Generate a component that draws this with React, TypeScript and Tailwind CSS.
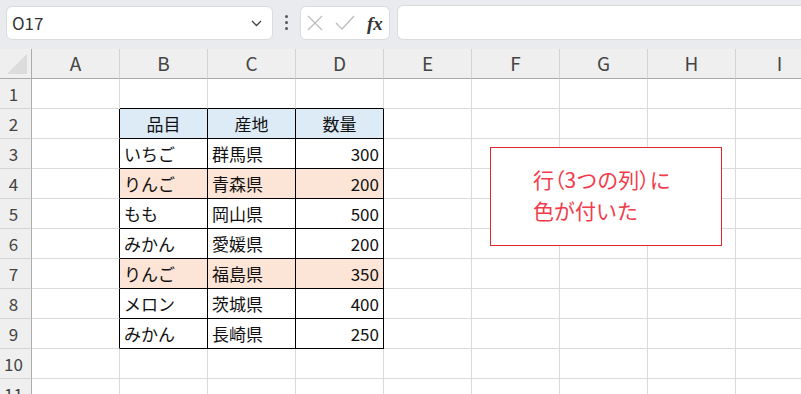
import React from 'react';

const cols = ['A', 'B', 'C', 'D', 'E', 'F', 'G', 'H', 'I'];

const table: { cells: string[]; kind: 'head' | 'plain' | 'peach' }[] = [
  { cells: ['品目', '産地', '数量'], kind: 'head' },
  { cells: ['いちご', '群馬県', '300'], kind: 'plain' },
  { cells: ['りんご', '青森県', '200'], kind: 'peach' },
  { cells: ['もも', '岡山県', '500'], kind: 'plain' },
  { cells: ['みかん', '愛媛県', '200'], kind: 'plain' },
  { cells: ['りんご', '福島県', '350'], kind: 'peach' },
  { cells: ['メロン', '茨城県', '400'], kind: 'plain' },
  { cells: ['みかん', '長崎県', '250'], kind: 'plain' },
];

const font = "font-['Noto_Sans_CJK_JP','Noto_Sans',sans-serif]";

function Cell({ row, col }: { row: number; col: number }) {
  // table spans B2:D9 -> col 1..3, row 2..9
  const inTable = col >= 1 && col <= 3 && row >= 2 && row <= 9;
  const rightBlack = col >= 0 && col <= 3 && row >= 2 && row <= 9;
  const bottomBlack = col >= 1 && col <= 3 && row >= 1 && row <= 9;
  const r = rightBlack ? 'border-r-black' : 'border-r-[#dadada]';
  const b = bottomBlack ? 'border-b-black' : 'border-b-[#dadada]';

  let bg = 'bg-white';
  let text = '';
  let align = 'justify-start pl-1';
  if (inTable) {
    const t = table[row - 2];
    text = t.cells[col - 1];
    if (t.kind === 'head') {
      bg = 'bg-[#ddebf7]';
      align = 'justify-center';
    } else {
      if (t.kind === 'peach') bg = 'bg-[#fce4d6]';
      if (col === 3) align = 'justify-end pr-1';
    }
  }

  return (
    <div className={`h-[30px] border-r border-b ${r} ${b} ${bg} flex items-center ${align} text-[17px] text-[#111]`}>
      {text}
    </div>
  );
}

export default function App() {
  const rows = Array.from({ length: 11 }, (_, i) => i + 1);

  return (
    <div className={`w-[801px] h-[394px] overflow-hidden bg-white ${font}`}>
      {/* Toolbar: name box + formula bar */}
      <div className="h-[49px] bg-[#e9ebee] flex items-start pt-[5px] gap-0">
        <div className="ml-[6px] mt-px w-[267px] h-[34px] bg-white rounded-md border border-[#d9dbdf] flex items-center justify-between pl-[5px] pr-[10px]">
          <span className="text-[17px] text-[#333]">O17</span>
          <svg width="11" height="7" viewBox="0 0 11 7" fill="none">
            <path d="M1 1l4.5 4.5L10 1" stroke="#444" strokeWidth="1.3" />
          </svg>
        </div>
        <div className="w-[27px] h-[35px] flex flex-col items-center justify-center gap-[3px]">
          <div className="w-[3px] h-[3px] bg-[#555] rounded-full" />
          <div className="w-[3px] h-[3px] bg-[#555] rounded-full" />
          <div className="w-[3px] h-[3px] bg-[#555] rounded-full" />
        </div>
        <div className="mt-px w-[90px] h-[34px] bg-white rounded-md border border-[#d9dbdf] flex items-center pl-[6px] gap-[12px]">
          <svg width="16" height="16" viewBox="0 0 16 16" fill="none">
            <path d="M1 1l14 14M15 1L1 15" stroke="#bcbcbc" strokeWidth="1.3" />
          </svg>
          <svg width="20" height="16" viewBox="0 0 20 16" fill="none">
            <path d="M1 8l6 6L19 1" stroke="#bcbcbc" strokeWidth="1.3" />
          </svg>
          <span className="font-['Liberation_Serif',serif] italic font-bold text-[19px] text-[#333] leading-none">fx</span>
        </div>
        <div className="ml-[7px] flex-1 h-[35px] bg-white rounded-l-md border border-r-0 border-[#d9dbdf]" />
      </div>

      {/* Sheet */}
      <div className="relative">
        <div className="grid grid-cols-[32px_repeat(9,88px)]">
          {/* column header */}
          <div className="h-[30px] bg-[#efefef] border-r border-b border-[#ababab] relative">
            <div className="absolute left-[7px] top-[5px] w-[20px] h-[20px] bg-[#dcdcdc] [clip-path:polygon(100%_0,100%_100%,0_100%)]" />
          </div>
          {cols.map((c) => (
            <div
              key={c}
              className="h-[30px] bg-[#efefef] border-r border-r-[#d4d4d4] border-b border-b-[#ababab] flex items-center justify-center text-[19px] text-[#444]"
            >
              {c}
            </div>
          ))}

          {rows.map((r) => (
            <React.Fragment key={r}>
              <div className="h-[30px] bg-[#efefef] border-r border-r-[#ababab] border-b border-b-[#d4d4d4] flex items-center justify-center pr-1 text-[17px] text-[#444]">
                {r}
              </div>
              {cols.map((_, ci) => (
                <Cell key={ci} row={r} col={ci} />
              ))}
            </React.Fragment>
          ))}
        </div>

        {/* Text box shape */}
        <div className="absolute left-[490px] top-[98px] w-[232px] h-[99px] border border-[#e3252d] bg-white pl-[42px] pt-[16px] text-[21px] leading-[31px] text-[#f23c4c]">
          <div>
            行<span className="[font-feature-settings:'palt']">（</span>3つの列<span className="[font-feature-settings:'palt']">）</span>に
          </div>
          <div>色が付いた</div>
        </div>
      </div>
    </div>
  );
}
